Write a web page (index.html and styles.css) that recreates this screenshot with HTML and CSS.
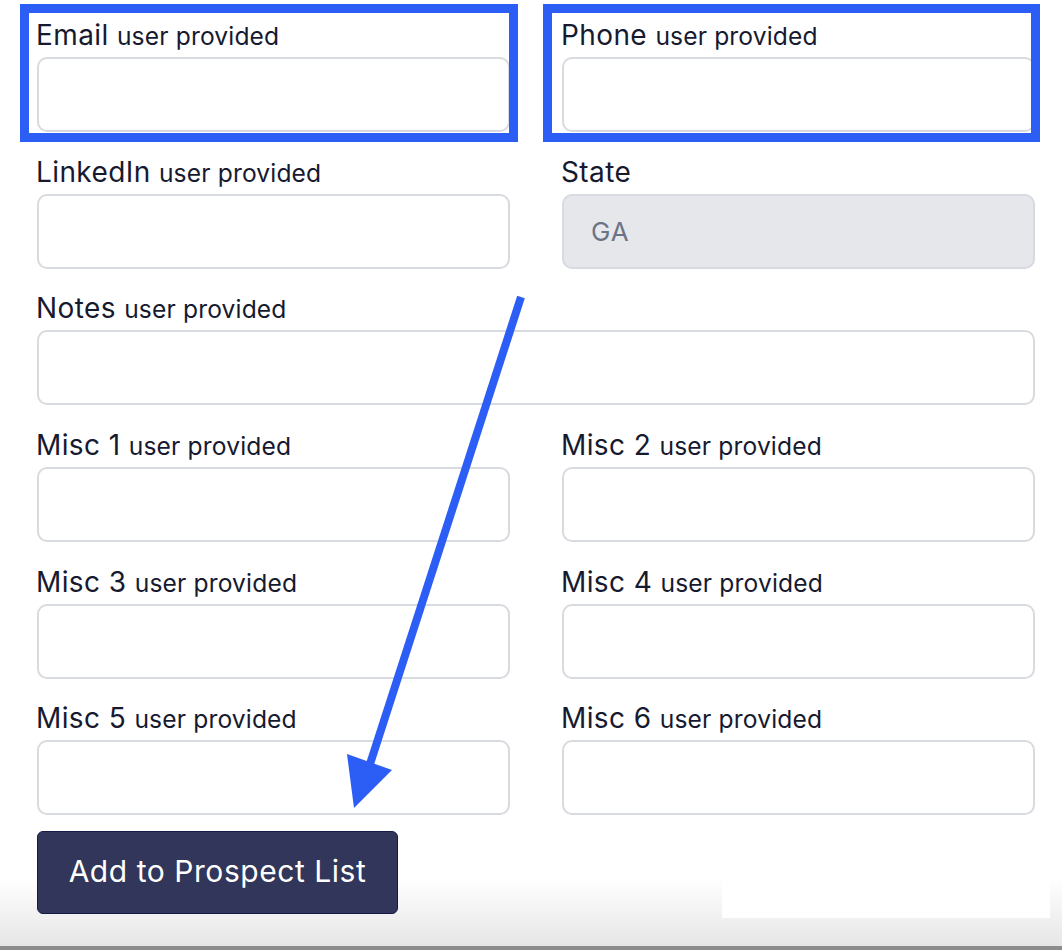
FILE: index.html
```html
<!DOCTYPE html>
<html lang="en">
<head>
<meta charset="utf-8">
<title>Prospect form</title>
<link rel="stylesheet" href="styles.css">
</head>
<body>
<div class="page">
  <form class="form">
    <div class="field">
      <label class="label">Email <span class="hint">user provided</span></label>
      <input class="input" type="text">
    </div>
    <div class="field">
      <label class="label">Phone <span class="hint">user provided</span></label>
      <input class="input" type="text">
    </div>
    <div class="field">
      <label class="label">LinkedIn <span class="hint">user provided</span></label>
      <input class="input" type="text">
    </div>
    <div class="field">
      <label class="label">State</label>
      <input class="input input-disabled" type="text" value="GA" disabled>
    </div>
    <div class="field field-wide">
      <label class="label">Notes <span class="hint">user provided</span></label>
      <input class="input" type="text">
    </div>
    <div class="field">
      <label class="label">Misc 1 <span class="hint">user provided</span></label>
      <input class="input" type="text">
    </div>
    <div class="field">
      <label class="label">Misc 2 <span class="hint">user provided</span></label>
      <input class="input" type="text">
    </div>
    <div class="field">
      <label class="label">Misc 3 <span class="hint">user provided</span></label>
      <input class="input" type="text">
    </div>
    <div class="field">
      <label class="label">Misc 4 <span class="hint">user provided</span></label>
      <input class="input" type="text">
    </div>
    <div class="field">
      <label class="label">Misc 5 <span class="hint">user provided</span></label>
      <input class="input" type="text">
    </div>
    <div class="field">
      <label class="label">Misc 6 <span class="hint">user provided</span></label>
      <input class="input" type="text">
    </div>
  </form>
  <button class="btn" type="button">Add to Prospect List</button>
</div>

<div class="highlight highlight-email"></div>
<div class="highlight highlight-phone"></div>

<svg class="arrow" width="1062" height="950" viewBox="0 0 1062 950" aria-hidden="true">
  <line x1="521" y1="297" x2="370" y2="764" stroke="#2c5ef6" stroke-width="8"/>
  <polygon points="347,754 392,770 354,808" fill="#2c5ef6"/>
</svg>

<div class="chrome-patch"></div>
</body>
</html>
```

FILE: styles.css
```css
html {
  margin: 0;
  height: 100%;
  background: linear-gradient(to bottom, #ffffff 0, #ffffff 878px, #e6e6e6 946px, #8c8c8c 946px, #8c8c8c 950px);
  background-repeat: no-repeat;
  background-size: 100% 950px;
}

body {
  margin: 0;
  font-family: Inter, "Noto Sans", "Liberation Sans", sans-serif;
  color: #171a2f;
  overflow: hidden;
  height: 950px;
}

.page {
  padding: 15px 0 0 37px;
  width: 998px;
}

.form {
  display: grid;
  grid-template-columns: 473px 473px;
  column-gap: 52px;
  row-gap: 19.66px;
}

.field {
  display: flex;
  flex-direction: column;
}

.field-wide {
  grid-column: 1 / span 2;
}

.label {
  font-size: 28px;
  letter-spacing: 0.4px;
  line-height: 40px;
  height: 40px;
  margin-bottom: 2px;
  margin-left: -1px;
  white-space: nowrap;
}

.hint {
  font-size: 24.6px;
  letter-spacing: 0.15px;
}

.input {
  box-sizing: border-box;
  height: 75px;
  width: 100%;
  margin: 0;
  border: 2px solid #d7dade;
  border-radius: 10px;
  background: #ffffff;
  font-family: inherit;
  font-size: 26px;
  letter-spacing: 1px;
  padding: 0 27px;
  color: #6b7386;
}

.input-disabled {
  background: #e5e7eb;
  color: #6b7386;
  -webkit-text-fill-color: #6b7386;
  opacity: 1;
}

.btn {
  margin-top: 16px;
  box-sizing: border-box;
  width: 361px;
  height: 83px;
  background: #31365a;
  border: 1.5px solid #141a45;
  border-radius: 6px;
  color: #ffffff;
  font-family: inherit;
  font-size: 30px;
  letter-spacing: 0.55px;
  padding: 0 0 3px;
  cursor: pointer;
}

.highlight {
  position: absolute;
  top: 4px;
  height: 138px;
  box-sizing: border-box;
  border: 9px solid #2c5ef6;
}

.highlight-email {
  left: 20px;
  width: 498px;
}

.highlight-phone {
  left: 543px;
  width: 497px;
}

.arrow {
  position: absolute;
  left: 0;
  top: 0;
  pointer-events: none;
}

.chrome-patch {
  position: absolute;
  left: 722px;
  top: 860px;
  width: 328px;
  height: 58px;
  background: #ffffff;
}
```
